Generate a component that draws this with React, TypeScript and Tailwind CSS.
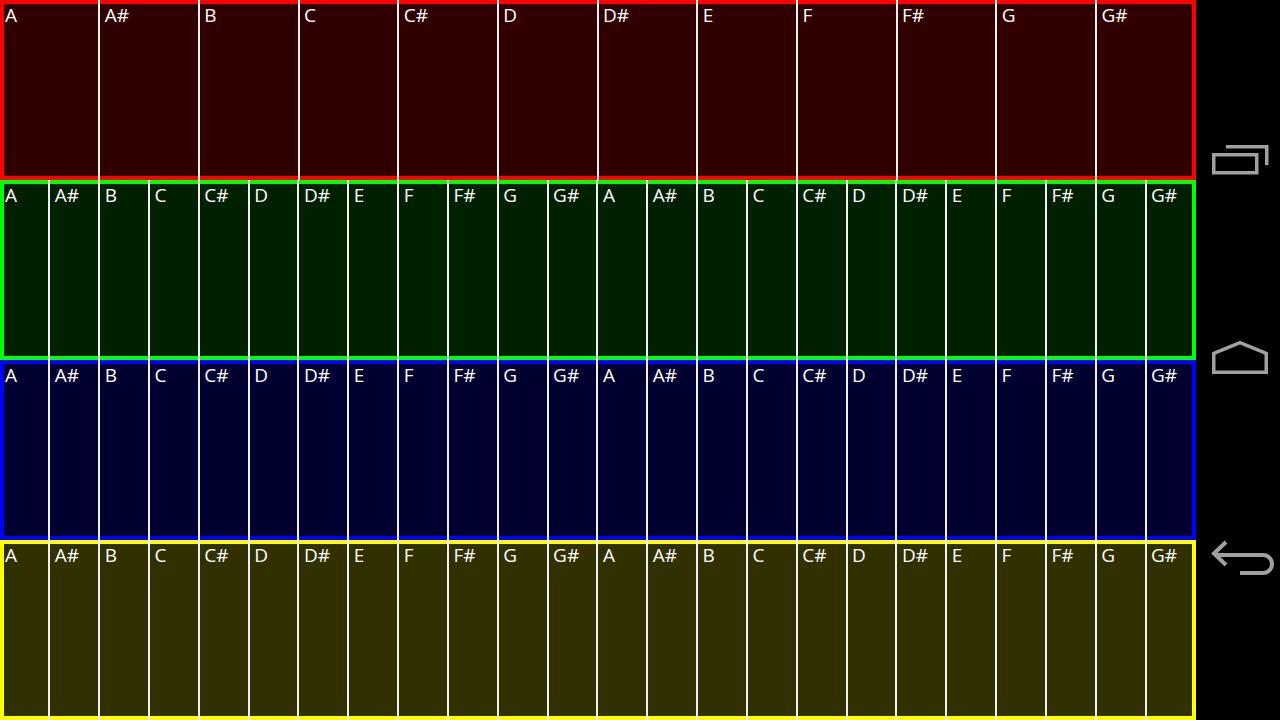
const OCTAVE = ["A", "A#", "B", "C", "C#", "D", "D#", "E", "F", "F#", "G", "G#"];

const ROWS = [
  {
    notes: OCTAVE,
    className: "bg-[#300000] shadow-[inset_0_0_0_4px_#ff0000]",
  },
  {
    notes: [...OCTAVE, ...OCTAVE],
    className: "bg-[#002000] shadow-[inset_0_0_0_4px_#00ff00]",
  },
  {
    notes: [...OCTAVE, ...OCTAVE],
    className: "bg-[#000030] shadow-[inset_0_0_0_4px_#0000ff]",
  },
  {
    notes: [...OCTAVE, ...OCTAVE],
    className: "bg-[#303000] shadow-[inset_0_0_0_4px_#ffff00]",
  },
];

const NoteRow = ({ notes, className }: { notes: string[]; className: string }) => (
  <div className={`flex h-[180px] ${className}`}>
    {notes.map((note, index) => (
      <div key={index} className="relative flex-1 pl-[5px] pt-[3px]">
        <span className="text-[19px] leading-[24px] text-white">{note}</span>
        {index < notes.length - 1 ? (
          <div className="absolute inset-y-0 right-[-0.5px] w-[2px] bg-[#f0f0f0]" />
        ) : null}
      </div>
    ))}
  </div>
);

const NavIcon = ({ children }: { children: React.ReactNode }) => (
  <div className="h-[200px] py-[70px]">
    <svg
      width={84}
      height={60}
      viewBox="0 0 84 60"
      fill="none"
      stroke="#a0a0a0"
      className="block"
    >
      {children}
    </svg>
  </div>
);

export default function App() {
  return (
    <div
      className="flex h-[720px] w-[1280px] overflow-hidden bg-black"
      style={{ fontFamily: '"Open Sans", "Noto Sans", sans-serif' }}
    >
      <div className="w-[1196px]">
        {ROWS.map((row) => (
          <NoteRow key={row.className} notes={row.notes} className={row.className} />
        ))}
      </div>

      <div className="flex flex-1 flex-col pt-[60px]">
        <NavIcon>
          <rect x={17.75} y={24.75} width={43} height={18} strokeWidth={3.5} />
          <path d="M30 16.75H70.75V35" strokeWidth={3.5} />
        </NavIcon>
        <NavIcon>
          <path d="M17.75 42.25V23.5L44 12.75L70.25 23.5V42.25Z" strokeWidth={3.5} />
        </NavIcon>
        <NavIcon>
          <path d="M30 12L18 23.5L30 35" strokeWidth={4} />
          <path d="M19 25H67a9 9 0 0 1 0 18H44" strokeWidth={4} />
        </NavIcon>
      </div>
    </div>
  );
}
